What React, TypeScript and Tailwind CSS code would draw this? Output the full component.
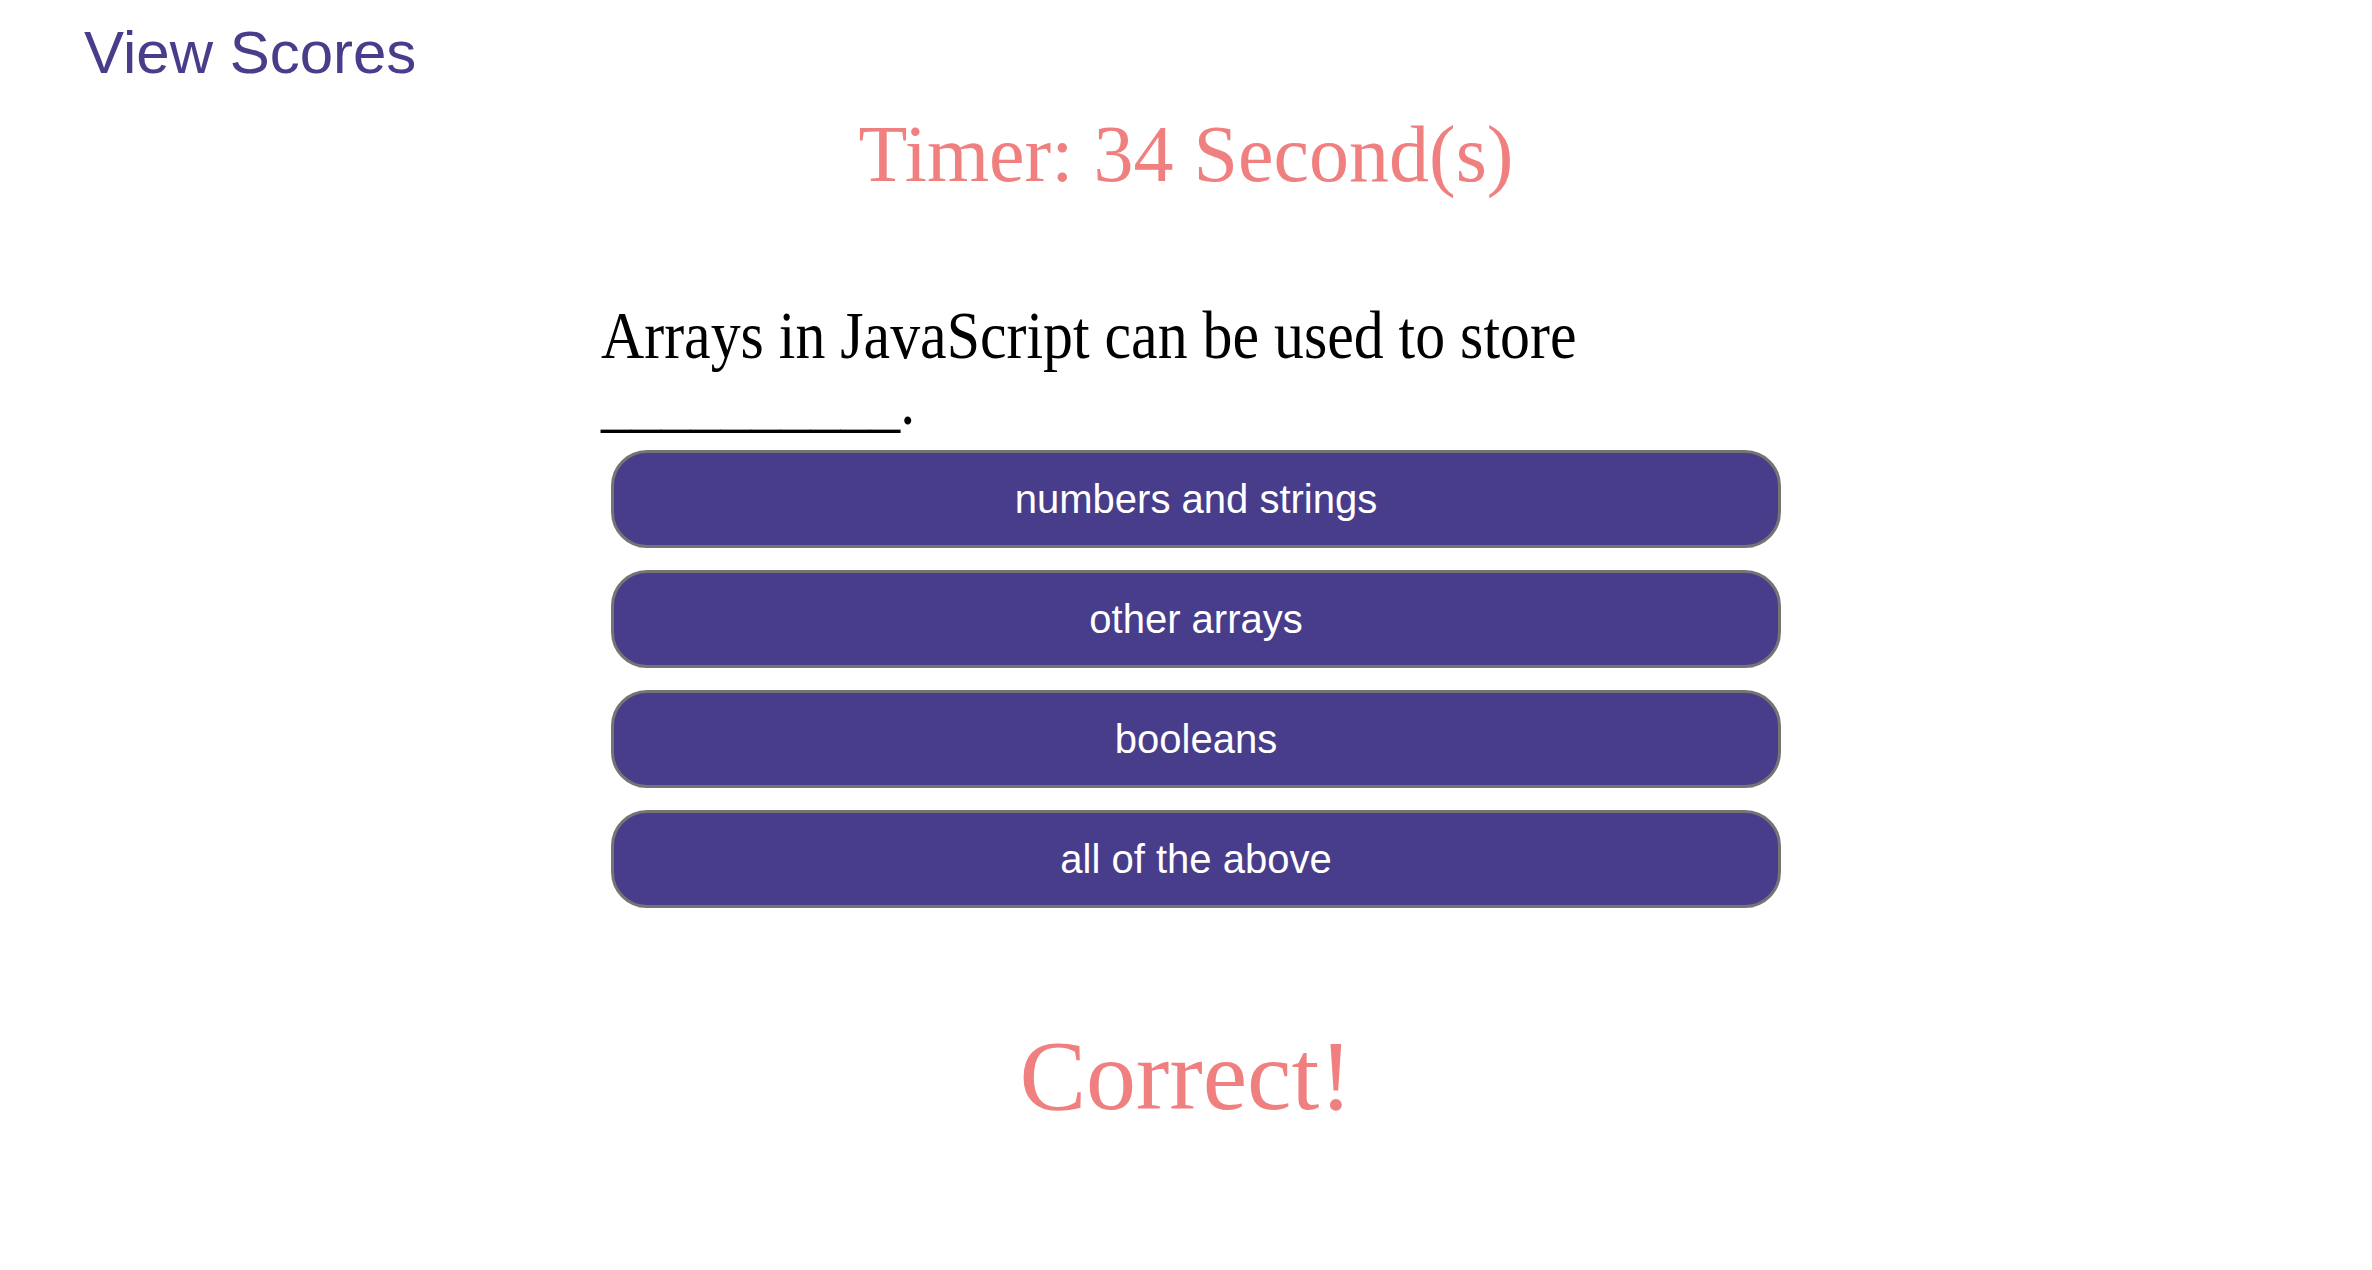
import { useState } from 'react'

const choices = ['numbers and strings', 'other arrays', 'booleans', 'all of the above']

export default function App() {
  const [seconds] = useState(34)

  return (
    <div className="min-h-screen bg-white font-['Liberation_Serif',serif]">
      <header className="pl-[84px] pt-[19px]">
        <a href="#" className="font-['Liberation_Sans',Arial,sans-serif] text-[60px] leading-[68px] text-[#483d8b]">
          View Scores
        </a>
      </header>

      <h1 className="mt-[22px] text-center text-[80px] font-normal leading-[90px] text-[#f08080]">
        Timer: {seconds} Second(s)
      </h1>

      <main className="ml-[601px] mt-[103px] w-[1189px]">
        <p className="w-[1160px] origin-left scale-x-[0.88] text-[68px] leading-[66px] text-black">
          Arrays in JavaScript can be used to store __________.
        </p>

        <div className="ml-[10px] mt-[16px] flex w-[1170px] flex-col gap-[22px]">
          {choices.map((c) => (
            <button
              key={c}
              className="flex h-[98px] items-center justify-center rounded-[36px] border-[3px] border-[#747474] bg-[#483d8b] font-['Liberation_Sans',Arial,sans-serif] text-[40px] text-white"
            >
              {c}
            </button>
          ))}
        </div>
      </main>

      <p className="mt-[112px] text-center text-[100px] leading-[111px] text-[#f08080]">Correct!</p>
    </div>
  )
}
